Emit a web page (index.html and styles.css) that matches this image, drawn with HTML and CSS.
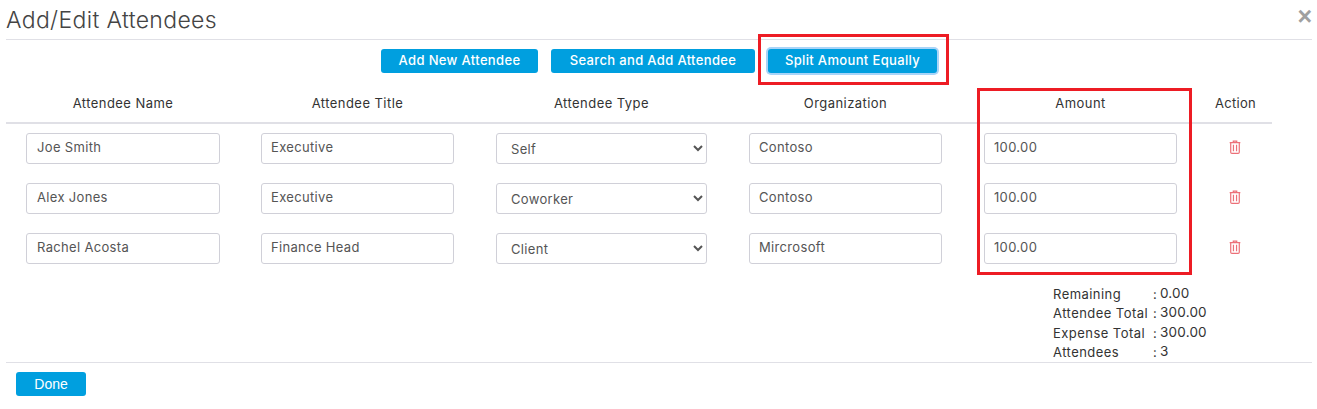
FILE: index.html
```html
<!DOCTYPE html>
<html lang="en">
<head>
<meta charset="utf-8">
<title>Add/Edit Attendees</title>
<link rel="stylesheet" href="styles.css">
</head>
<body>
<main class="modal">
  <header class="modal-header">
    <h1 class="modal-title">Add/Edit Attendees</h1>
    <span class="close">×</span>
  </header>
  <div class="actions">
    <button class="btn btn-new">Add New Attendee</button>
    <button class="btn btn-search">Search and Add Attendee</button>
    <span class="highlight-wrap">
      <button class="btn btn-focus">Split Amount Equally</button>
      <span class="annot annot-split"></span>
    </span>
  </div>
  <div class="table">
    <span class="annot annot-amount"></span>
    <div class="row head">
      <div class="cell">Attendee Name</div><div class="cell">Attendee Title</div><div class="cell">Attendee Type</div><div class="cell">Organization</div><div class="cell">Amount</div><div class="head-action">Action</div>
    </div>
    <div class="row">
      <div class="cell"><input class="field" value="Joe Smith"></div>
      <div class="cell"><input class="field" value="Executive"></div>
      <div class="cell"><select class="field select"><option>Self</option></select></div>
      <div class="cell"><input class="field" value="Contoso"></div>
      <div class="cell"><input class="field" value="100.00"></div>
      <div class="cell-action"><svg class="trash" viewBox="0 0 14 16"><path d="M5 2.5V1.2h4v1.3M.8 3h12.4M2 3v11a1.4 1.4 0 0 0 1.4 1.4h7.2A1.4 1.4 0 0 0 12 14V3M5.2 5.5v7.5M8.8 5.5v7.5"/></svg></div>
    </div>
    <div class="row">
      <div class="cell"><input class="field" value="Alex Jones"></div>
      <div class="cell"><input class="field" value="Executive"></div>
      <div class="cell"><select class="field select"><option>Coworker</option></select></div>
      <div class="cell"><input class="field" value="Contoso"></div>
      <div class="cell"><input class="field" value="100.00"></div>
      <div class="cell-action"><svg class="trash" viewBox="0 0 14 16"><path d="M5 2.5V1.2h4v1.3M.8 3h12.4M2 3v11a1.4 1.4 0 0 0 1.4 1.4h7.2A1.4 1.4 0 0 0 12 14V3M5.2 5.5v7.5M8.8 5.5v7.5"/></svg></div>
    </div>
    <div class="row">
      <div class="cell"><input class="field" value="Rachel Acosta"></div>
      <div class="cell"><input class="field" value="Finance Head"></div>
      <div class="cell"><select class="field select"><option>Client</option></select></div>
      <div class="cell"><input class="field" value="Mircrosoft"></div>
      <div class="cell"><input class="field" value="100.00"></div>
      <div class="cell-action"><svg class="trash" viewBox="0 0 14 16"><path d="M5 2.5V1.2h4v1.3M.8 3h12.4M2 3v11a1.4 1.4 0 0 0 1.4 1.4h7.2A1.4 1.4 0 0 0 12 14V3M5.2 5.5v7.5M8.8 5.5v7.5"/></svg></div>
    </div>
  </div>
  <dl class="summary">
    <dt>Remaining</dt><dd>0.00</dd>
    <dt>Attendee Total</dt><dd>300.00</dd>
    <dt>Expense Total</dt><dd>300.00</dd>
    <dt>Attendees</dt><dd>3</dd>
  </dl>
  <footer class="modal-footer">
    <button class="btn btn-done">Done</button>
  </footer>
</main>
</body>
</html>
```
FILE: styles.css
```css
* { box-sizing: border-box; }
html, body { margin: 0; background: #fff; }
body { font-family: Inter, "Open Sans", sans-serif; font-size: 13px; color: #333; }
.modal { width: 1317px; height: 409px; padding: 0 5px 0 6px; overflow: hidden; }
.modal-header { display: flex; justify-content: space-between; height: 40px; border-bottom: 1px solid #e0e0e6; }
.modal-title { margin: 7px 0 0; font-size: 23px; font-weight: 300; line-height: 26px; letter-spacing: .35px; color: #444; }
.close { margin: 3px 0 0; font: bold 25px/26px "Liberation Sans", sans-serif; color: #a0a0a0; }
.actions { display: flex; justify-content: center; gap: 13px; margin-top: 9px; height: 24px; }
.btn { height: 24px; padding: 0 0 2px; border: 0; border-radius: 3px; background: #009fdf; color: #fff; font: 500 13px/22px Inter, sans-serif; letter-spacing: .35px; }
.btn-new { width: 157px; }
.btn-search { width: 204px; }
.btn-focus { width: 169px; box-shadow: 0 0 0 2px #a8d4f8; }
.highlight-wrap { position: relative; display: block; height: 24px; }
.annot { position: absolute; border: 3px solid #ed1c24; pointer-events: none; }
.annot-split { left: -10px; top: -15px; width: 191px; height: 51px; }
.annot-amount { left: 971px; top: 15px; width: 215px; height: 187px; }
.table { position: relative; width: 1266px; }
.row { display: grid; grid-template-columns: 235px 235px 253px 235px 235px 73px; }
.row:not(.head) { height: 50px; }
.head { height: 51px; padding-top: 11px; margin-bottom: 9px; border-bottom: 2px solid #e0e0e6; align-items: center; text-align: center; letter-spacing: .45px; }
.cell { padding: 0 22px 0 20px; }
.cell:first-child { padding-right: 21px; }
.head-action { letter-spacing: .3px; }
.cell-action { display: flex; justify-content: center; padding: 7px 2px 0 0; }
.field { display: block; width: 100%; height: 31px; padding: 0 9px 4px; border: 1px solid #d0d0d8; border-radius: 3px; background: #fff; color: #555; font: 13px Inter, sans-serif; letter-spacing: .33px; }
.cell:first-child .field { padding-left: 10px; }
.select, .cell:first-child .select { padding: 0 0 0 10px; }
.trash { width: 12px; height: 14px; fill: none; stroke: #ec7078; stroke-width: 1.4; }
.summary { display: grid; grid-template-columns: 100px auto; width: 170px; height: 77px; margin: 2px 0 0 1047px; line-height: 18.8px; }
.summary dt { position: relative; margin: 0; letter-spacing: .45px; }
.summary dt::after { content: ":"; position: absolute; left: 100px; }
.summary dd { align-self: start; margin: 1px 0 0 7px; font-size: 13.5px; line-height: 15px; letter-spacing: .2px; }
.modal-footer { padding: 9px 10px 0; border-top: 1px solid #e0e0e6; }
.btn-done { width: 70px; padding: 0; font: 14px/24px "Liberation Sans", sans-serif; letter-spacing: 0; }
```
